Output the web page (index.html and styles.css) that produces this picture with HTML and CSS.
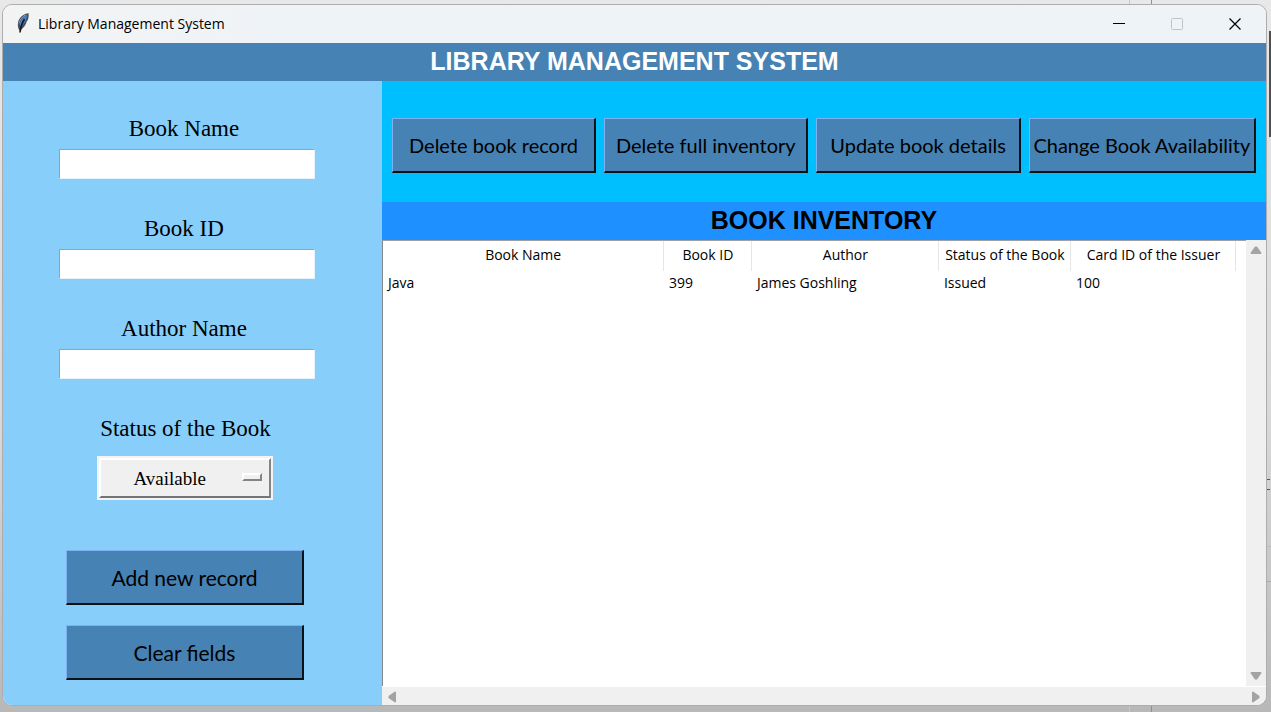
FILE: index.html
```html
<!DOCTYPE html>
<html lang="en">
<head>
<meta charset="utf-8">
<title>Library Management System</title>
<link rel="stylesheet" href="styles.css">
</head>
<body>
<div class="window">
  <header class="titlebar">
    <svg class="feather" width="14" height="22" viewBox="0 0 14 22" aria-hidden="true">
      <path d="M12.600 1.200C8 1.500 4 4.500 2.200 9.500C1.500 13 1.800 15.500 3.300 18.500L4.800 18C8 15.500 10 12.500 10.700 9.500L11.800 8C12.600 6 12.800 4 12.600 1.200Z" fill="#4a4d52"/>
      <path d="M11.200 2.800C8 4 5 7 3.700 13L5.500 14.500C8.500 11.500 9.300 9.500 10.300 7Z" fill="#4584d4"/>
      <path d="M9.500 3C6.500 4.500 4 7.500 3 11.500" fill="none" stroke="#8fa3b8" stroke-width="1"/>
      <path d="M8.500 7C6 11 4.500 15 4 20.500" fill="none" stroke="#15181d" stroke-width="1.500"/>
    </svg>
    <span class="caption">Library Management System</span>
    <div class="controls">
      <button class="control" type="button" aria-label="Minimize"><svg width="14" height="14" viewBox="0 0 14 14"><path d="M1 6.500H13" stroke="#000"/></svg></button>
      <button class="control" type="button" aria-label="Maximize" disabled><svg width="14" height="14" viewBox="0 0 14 14"><rect x="1.500" y="1.500" width="11" height="11" rx="1" fill="none" stroke="#c0c3c6"/></svg></button>
      <button class="control" type="button" aria-label="Close"><svg width="14" height="14" viewBox="0 0 14 14"><path d="M1.500 1.500L12.500 12.500M12.500 1.500L1.500 12.500" stroke="#000" stroke-width="1.200"/></svg></button>
    </div>
  </header>
  <h1 class="banner">LIBRARY MANAGEMENT SYSTEM</h1>
  <div class="workspace">
    <form class="entry">
      <div class="fields">
        <div class="field">
          <label class="label" for="book-name">Book Name</label>
          <input class="text" id="book-name" type="text">
        </div>
        <div class="field">
          <label class="label" for="book-id">Book ID</label>
          <input class="text" id="book-id" type="text">
        </div>
        <div class="field">
          <label class="label" for="author-name">Author Name</label>
          <input class="text" id="author-name" type="text">
        </div>
      </div>
      <div class="status">
        <label class="label-status" for="status">Status of the Book</label>
        <div class="menu">
          <select class="select" id="status">
            <option>Available</option>
            <option>Issued</option>
          </select>
          <span class="indicator"></span>
        </div>
      </div>
      <div class="actions">
        <button class="button" type="button">Add new record</button>
        <button class="button" type="button">Clear fields</button>
      </div>
    </form>
    <main class="main">
      <div class="toolbar">
        <button class="button" type="button">Delete book record</button>
        <button class="button" type="button">Delete full inventory</button>
        <button class="button" type="button">Update book details</button>
        <button class="button" type="button">Change Book Availability</button>
      </div>
      <h2 class="heading">BOOK INVENTORY</h2>
      <div class="inventory">
        <div class="sheet">
          <table class="table">
            <colgroup><col class="col-name"><col class="col-id"><col class="col-author"><col class="col-status"><col class="col-card"></colgroup>
            <thead>
              <tr><th>Book Name</th><th>Book ID</th><th>Author</th><th>Status of the Book</th><th>Card ID of the Issuer</th></tr>
            </thead>
            <tbody>
              <tr><td>Java</td><td>399</td><td>James Goshling</td><td>Issued</td><td>100</td></tr>
            </tbody>
          </table>
        </div>
        <div class="scroll-y">
          <button class="arrow" type="button" aria-label="Scroll up"><svg width="12" height="8" viewBox="0 0 12 8"><path d="M5 .5H7L11.500 7L11 8H1L.5 7Z" fill="#a3a3a3"/></svg></button>
          <button class="arrow" type="button" aria-label="Scroll down"><svg width="12" height="8" viewBox="0 0 12 8"><path d="M5 7.500H7L11.500 1L11 0H1L.5 1Z" fill="#a3a3a3"/></svg></button>
        </div>
      </div>
      <div class="scroll-x">
        <button class="arrow" type="button" aria-label="Scroll left"><svg width="8" height="12" viewBox="0 0 8 12"><path d="M.5 5V7L7 11.500L8 11V1L7 .5Z" fill="#a3a3a3"/></svg></button>
        <button class="arrow" type="button" aria-label="Scroll right"><svg width="8" height="12" viewBox="0 0 8 12"><path d="M7.500 5V7L1 11.500L0 11V1L1 .5Z" fill="#a3a3a3"/></svg></button>
      </div>
    </main>
  </div>
</div>
</body>
</html>
```
FILE: styles.css
```css
* {
  box-sizing: border-box;
}

body {
  margin: 0;
  min-height: 100vh;
  padding: 4px 4px 6px 2px;
  display: flex;
  /* desktop edges showing around the window */
  background:
    linear-gradient(#505050, #505050) right 0 top 31px / 2px 106px no-repeat,
    linear-gradient(#555, #555) right 1px top 479px / 3px 1px no-repeat,
    linear-gradient(#555, #555) right 1px top 489px / 3px 1px no-repeat,
    linear-gradient(#bbb, #bbb) right 0 top 546px / 5px 1px no-repeat,
    linear-gradient(#aaa, #aaa) right 0 top 581px / 5px 1px no-repeat,
    linear-gradient(#909090, #909090) right 119px top 0 / 1px 100% no-repeat,
    linear-gradient(#c8c8c8, #c8c8c8) right 141px top 0 / 1px 100% no-repeat,
    linear-gradient(#e8e8e8, #d8d8d8 60%, #b8b8b8);
  font-family: "Open Sans", "Noto Sans", sans-serif;
  color: #000;
}

button {
  font: inherit;
  color: inherit;
}

.window {
  flex: 1;
  display: flex;
  flex-direction: column;
  overflow: hidden;
  border: 1px solid #adadad;
  border-radius: 10px;
  background: #f0f0f0;
}

.titlebar {
  display: flex;
  align-items: center;
  height: 38px;
  padding: 0 2px 0 13px;
  background: linear-gradient(90deg, #f3f3f3, #eef3f8 25%);
}

.feather {
  margin-bottom: 2px;
}

.caption {
  margin-left: 8px;
  padding-bottom: 2px;
  font-size: 14px;
}

.controls {
  display: flex;
  margin-left: auto;
}

.control {
  display: grid;
  place-items: center;
  width: 58px;
  height: 38px;
  padding: 0;
  border: 0;
  background: none;
}

.banner,
.heading {
  margin: 0;
  height: 38px;
  font: bold 25px/37px "Liberation Sans", Arial, sans-serif;
  text-align: center;
}

.banner {
  background: #4682b4;
  color: #fff;
}

.workspace {
  flex: 1;
  display: grid;
  grid-template-columns: 30% 1fr;
}

.entry {
  padding-top: 34px;
  background: #87cefa;
}

.fields {
  padding-right: 11px;
}

.field {
  display: flex;
  flex-direction: column;
  align-items: center;
  height: 100px;
}

.label,
.label-status {
  font: 23px/28px "Liberation Serif", serif;
}

.label {
  margin-bottom: 6px;
  padding-right: 6px;
}

.label-status {
  margin-bottom: 13px;
}

.text {
  width: 256px;
  height: 30px;
  padding: 0 4px;
  border: 1px solid;
  border-color: #a0a0a0 #e3f2fb #e3f2fb #a0a0a0;
  background: #fff;
  font: 19px "Liberation Serif", serif;
}

.status {
  display: flex;
  flex-direction: column;
  align-items: center;
  padding-right: 14px;
}

.menu {
  position: relative;
  width: 176px;
  height: 44px;
  padding: 2px;
  background: #f3f3f3;
}

.select {
  appearance: none;
  width: 100%;
  height: 100%;
  padding: 0 32px;
  border: 2px solid;
  border-color: #fff #848484 #747474 #fff;
  border-radius: 0;
  background: #f0f0f0;
  color: #000;
  font: 19px "Liberation Serif", serif;
}

.indicator {
  position: absolute;
  right: 11px;
  top: 17px;
  width: 20px;
  height: 8px;
  border: 2px solid;
  border-color: #fff #848484 #848484 #fff;
  background: #f0f0f0;
  pointer-events: none;
}

.actions {
  display: flex;
  flex-direction: column;
  align-items: center;
  gap: 20px;
  padding: 50px 15px 25px 0;
}

.actions .button {
  width: 238px;
  font-size: 21px;
}

.button {
  height: 55px;
  padding: 0;
  border: 2px solid;
  border-color: #7fb0f0 #0a1218 #0a1218 #7fb0f0;
  border-top-width: 1px;
  border-left-width: 1px;
  background: #4682b4;
  font: 20px Lato, sans-serif;
  white-space: nowrap;
}

.main {
  display: flex;
  flex-direction: column;
  min-width: 0;
}

.toolbar {
  display: grid;
  grid-template-columns: 204fr 204fr 204fr 227fr;
  gap: 8px;
  padding: 37px 10px 29px;
  background: #00bfff;
}

.heading {
  background: #1e90ff;
}

.inventory {
  flex: 1;
  display: flex;
}

.sheet {
  flex: 1;
  border-top: 1px solid #a0a0a0;
  border-left: 1px solid #828790;
  background: #fff;
}

.table {
  table-layout: fixed;
  width: 853px;
  border-collapse: collapse;
  font-size: 14px;
  line-height: 20px;
  white-space: nowrap;
}

.table th {
  height: 30px;
  padding: 0 0 2px;
  border-right: 1px solid #e5e5e5;
  font-weight: normal;
}

.table td {
  height: 25px;
  padding: 0 5px 2px;
}

.col-name {
  width: 281px;
}

.col-id {
  width: 88px;
}

.col-author {
  width: 187px;
}

.col-status {
  width: 132px;
}

.col-card {
  width: 165px;
}

.scroll-y,
.scroll-x {
  display: flex;
  justify-content: space-between;
  background: #f0f0f0;
}

.scroll-y {
  flex-direction: column;
  width: 20px;
}

.scroll-x {
  height: 19px;
  border-top: 1px solid #fff;
}

.arrow {
  display: grid;
  place-items: center;
  width: 20px;
  height: 20px;
  padding: 0;
  border: 0;
  background: none;
}
```
